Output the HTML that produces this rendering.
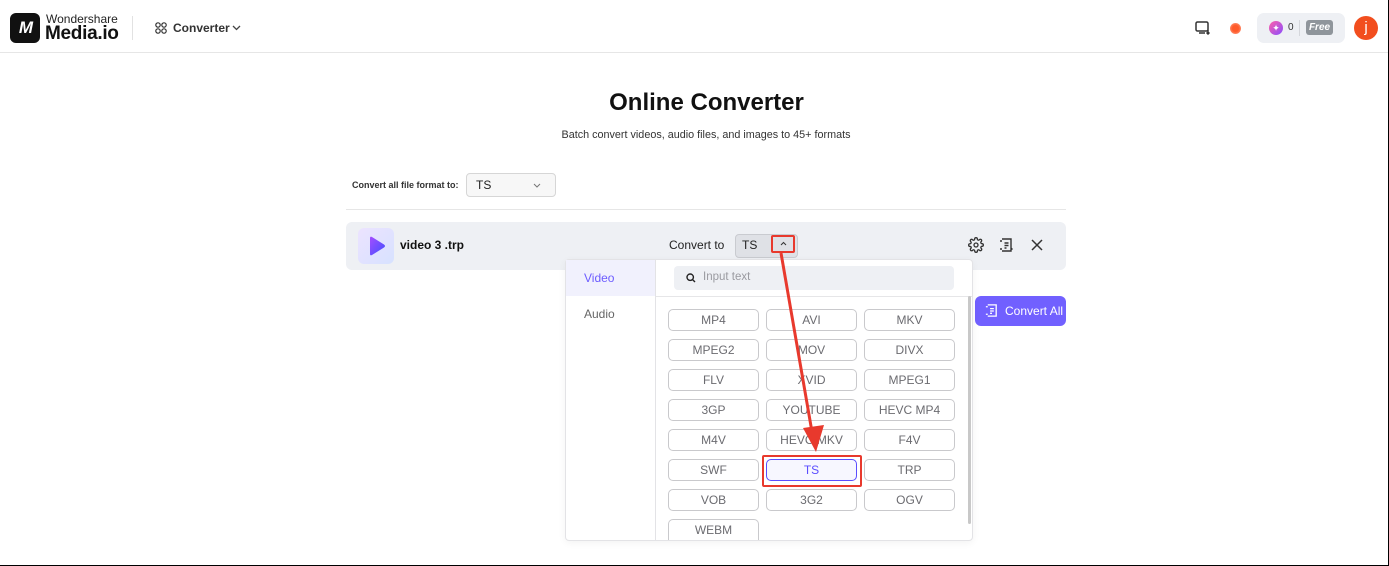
<!DOCTYPE html>
<html><head><meta charset="utf-8"><style>
*{margin:0;padding:0;box-sizing:border-box}
html,body{width:1389px;height:566px;overflow:hidden;background:#fff;font-family:"Liberation Sans",sans-serif;color:#111}
.frame{position:absolute;left:0;top:0;width:1389px;height:566px;border:1px solid #000;border-left:none;border-top:none;z-index:50;pointer-events:none}
.abs{position:absolute}
.top{position:absolute;left:0;top:0;width:1389px;height:53px;border-bottom:1px solid #e6e6e6}
.btn{position:absolute;width:91px;height:22px;border:1px solid #c9c9cc;border-radius:5px;font-size:12px;color:#6b6b70;text-align:center;line-height:20px;background:#fff}
</style></head><body>
<div class="top">
  <div class="abs" style="left:10px;top:13px;width:30px;height:30px;background:#111;border-radius:6px;color:#fff;font-weight:bold;font-style:italic;font-size:17px;line-height:30px;text-align:center;letter-spacing:-2px">M</div>
  <div class="abs" style="left:46px;top:12px;font-size:12px;color:#222">Wondershare</div>
  <div class="abs" style="left:45px;top:23px;font-size:19px;font-weight:bold;letter-spacing:-0.3px">Media.io</div>
  <div class="abs" style="left:132px;top:16px;width:1px;height:24px;background:#e2e2e2"></div>
  <svg class="abs" style="left:155px;top:22px" width="12" height="12" viewBox="0 0 12 12" fill="none" stroke="#333" stroke-width="1.2"><circle cx="3" cy="3" r="2.2"/><circle cx="9" cy="3" r="2.2"/><circle cx="3" cy="9" r="2.2"/><circle cx="9" cy="9" r="2.2"/></svg>
  <div class="abs" style="left:173px;top:21px;font-size:12px;font-weight:bold;color:#333">Converter</div>
  <svg class="abs" style="left:232px;top:25px" width="9" height="6" viewBox="0 0 9 6" fill="none" stroke="#444" stroke-width="1.3"><path d="M1 1l3.5 3.5L8 1"/></svg>
  <svg class="abs" style="left:1195px;top:21px" width="16" height="14" viewBox="0 0 16 14" fill="none" stroke="#333" stroke-width="1.5"><rect x="1" y="1" width="12" height="9" rx="1.5"/><path d="M4 12h6M13 9v4M11.5 11.5l1.5 1.5 1.5-1.5"/></svg>
  <div class="abs" style="left:1230px;top:23px;width:11px;height:11px;border-radius:50%;background:radial-gradient(circle,#ff5a2a 40%,#ffb29a 100%)"></div>
  <div class="abs" style="left:1257px;top:13px;width:88px;height:30px;background:#eef0f4;border-radius:7px"></div>
  <div class="abs" style="left:1269px;top:21px;width:14px;height:14px;border-radius:50%;background:linear-gradient(135deg,#ff5fa8,#8a4dff);color:#fff;font-size:9px;text-align:center;line-height:14px">✦</div>
  <div class="abs" style="left:1288px;top:22px;font-size:10px;color:#333">0</div>
  <div class="abs" style="left:1299px;top:20px;width:1px;height:16px;background:#d5d7dc"></div>
  <div class="abs" style="left:1306px;top:20px;width:27px;height:15px;background:#8f959b;border-radius:3px;color:#fff;font-size:10px;font-weight:bold;font-style:italic;text-align:center;line-height:15px">Free</div>
  <div class="abs" style="left:1354px;top:16px;width:24px;height:24px;border-radius:50%;background:#f24e1e;color:#fff;font-size:15px;text-align:center;line-height:23px">j</div>
</div>

<div class="abs" style="left:12px;width:1389px;top:89px;text-align:center;font-size:24px;font-weight:bold;color:#111">Online Converter</div>
<div class="abs" style="left:0;width:1412px;top:129px;text-align:center;font-size:10.8px;color:#333">Batch convert videos, audio files, and images to 45+ formats</div>

<div class="abs" style="left:352px;top:180px;font-size:9px;font-weight:bold;color:#333">Convert all file format to:</div>
<div class="abs" style="left:466px;top:173px;width:90px;height:24px;border:1px solid #d6d6d6;border-radius:4px;background:#f7f7f7"></div>
<div class="abs" style="left:476px;top:178px;font-size:12px;color:#222">TS</div>
<svg class="abs" style="left:533px;top:183px" width="8" height="5" viewBox="0 0 8 5" fill="none" stroke="#777" stroke-width="1"><path d="M1 1l3 3 3-3"/></svg>
<div class="abs" style="left:346px;top:209px;width:720px;height:1px;background:#e6e6e6"></div>

<div class="abs" style="left:346px;top:222px;width:720px;height:48px;background:#eef0f4;border-radius:6px"></div>
<div class="abs" style="left:358px;top:228px;width:36px;height:36px;border-radius:6px;background:linear-gradient(135deg,#ece3ff,#d7e2ff)"></div>
<svg class="abs" style="left:368px;top:236px" width="18" height="20" viewBox="0 0 18 20"><defs><linearGradient id="g" x1="0" y1="0" x2="1" y2="1"><stop offset="0" stop-color="#a44dff"/><stop offset="1" stop-color="#4150ff"/></linearGradient></defs><path d="M2 2Q2 0 4 1L16 8.5Q18 10 16 11.5L4 19Q2 20 2 18Z" fill="url(#g)"/></svg>
<div class="abs" style="left:400px;top:238px;font-size:12px;font-weight:bold;color:#111">video 3 .trp</div>
<div class="abs" style="left:669px;top:238px;font-size:12px;color:#222">Convert to</div>
<div class="abs" style="left:735px;top:234px;width:63px;height:24px;border:1px solid #c9cbd0;border-radius:4px;background:#dfe1e6"></div>
<div class="abs" style="left:742px;top:238px;font-size:12px;color:#222">TS</div>
<div class="abs" style="left:771px;top:235px;width:24px;height:18px;border:2px solid #e8392d;border-radius:2px"></div>
<svg class="abs" style="left:780px;top:241px" width="7" height="5" viewBox="0 0 7 5" fill="none" stroke="#333" stroke-width="1"><path d="M1 4l2.5-2.5L6 4"/></svg>
<svg class="abs" style="left:968px;top:237px" width="16" height="16" viewBox="0 0 24 24" fill="none" stroke="#333" stroke-width="2"><circle cx="12" cy="12" r="3"/><path d="M19.4 15a1.7 1.7 0 0 0 .3 1.8l.1.1a2 2 0 1 1-2.8 2.8l-.1-.1a1.7 1.7 0 0 0-1.8-.3 1.7 1.7 0 0 0-1 1.5V21a2 2 0 1 1-4 0v-.1a1.7 1.7 0 0 0-1.1-1.5 1.7 1.7 0 0 0-1.8.3l-.1.1a2 2 0 1 1-2.8-2.8l.1-.1a1.7 1.7 0 0 0 .3-1.8 1.7 1.7 0 0 0-1.5-1H3a2 2 0 1 1 0-4h.1a1.7 1.7 0 0 0 1.5-1.1 1.7 1.7 0 0 0-.3-1.8l-.1-.1a2 2 0 1 1 2.8-2.8l.1.1a1.7 1.7 0 0 0 1.8.3H9a1.7 1.7 0 0 0 1-1.5V3a2 2 0 1 1 4 0v.1a1.7 1.7 0 0 0 1 1.5 1.7 1.7 0 0 0 1.8-.3l.1-.1a2 2 0 1 1 2.8 2.8l-.1.1a1.7 1.7 0 0 0-.3 1.8V9a1.7 1.7 0 0 0 1.5 1H21a2 2 0 1 1 0 4h-.1a1.7 1.7 0 0 0-1.5 1z"/></svg>
<svg class="abs" style="left:998px;top:237px" width="16" height="16" viewBox="0 0 16 16" fill="none" stroke="#333" stroke-width="1.4"><path d="M4 2h9v12H4M2 4h2M2 12h2M6.5 6h4M6.5 8.5h4M6.5 11h2M13 11l1.5 1.5"/></svg>
<svg class="abs" style="left:1031px;top:239px" width="12" height="12" viewBox="0 0 12 12" stroke="#333" stroke-width="1.5"><path d="M1 1l10 10M11 1L1 11"/></svg>

<div class="abs" style="left:975px;top:296px;width:91px;height:30px;background:#7160ff;border-radius:6px;color:#fff;font-size:12px;line-height:30px;padding-left:30px">Convert All</div>
<svg class="abs" style="left:984px;top:303px" width="15" height="15" viewBox="0 0 16 16" fill="none" stroke="#fff" stroke-width="1.4"><path d="M4 2h9v12H4M2 4h2M2 12h2M6.5 6h4M6.5 8.5h4M6.5 11h2"/></svg>

<div class="abs" style="left:565px;top:259px;width:408px;height:282px;background:#fff;border:1px solid #e3e3e6;border-radius:4px;box-shadow:0 2px 8px rgba(0,0,0,.05)"></div>
<div class="abs" style="left:566px;top:260px;width:89px;height:36px;background:#f1f1fd"></div>
<div class="abs" style="left:655px;top:260px;width:1px;height:280px;background:#e3e3e6"></div>
<div class="abs" style="left:584px;top:271px;font-size:12px;color:#6c5cff">Video</div>
<div class="abs" style="left:584px;top:307px;font-size:12px;color:#666">Audio</div>
<div class="abs" style="left:674px;top:266px;width:280px;height:24px;background:#eef0f4;border-radius:4px"></div>
<svg class="abs" style="left:686px;top:273px" width="10" height="10" viewBox="0 0 10 10" fill="none" stroke="#222" stroke-width="1.4"><circle cx="4.2" cy="4.2" r="3.2"/><path d="M6.6 6.6L9 9"/></svg>
<div class="abs" style="left:703px;top:271px;font-size:11.5px;color:#9a9aa0">Input text</div>
<div class="abs" style="left:656px;top:296px;width:316px;height:1px;background:#e6e6e8"></div>
<div class="abs" style="left:968px;top:296px;width:3px;height:228px;background:#c8c8c8;border-radius:2px"></div>

<div class="btn" style="left:668px;top:309px">MP4</div><div class="btn" style="left:766px;top:309px">AVI</div><div class="btn" style="left:864px;top:309px">MKV</div>
<div class="btn" style="left:668px;top:339px">MPEG2</div><div class="btn" style="left:766px;top:339px">MOV</div><div class="btn" style="left:864px;top:339px">DIVX</div>
<div class="btn" style="left:668px;top:369px">FLV</div><div class="btn" style="left:766px;top:369px">XVID</div><div class="btn" style="left:864px;top:369px">MPEG1</div>
<div class="btn" style="left:668px;top:399px">3GP</div><div class="btn" style="left:766px;top:399px">YOUTUBE</div><div class="btn" style="left:864px;top:399px">HEVC MP4</div>
<div class="btn" style="left:668px;top:429px">M4V</div><div class="btn" style="left:766px;top:429px">HEVC MKV</div><div class="btn" style="left:864px;top:429px">F4V</div>
<div class="btn" style="left:668px;top:459px">SWF</div><div class="btn" style="left:766px;top:459px;border-color:#5b4dff;color:#5b4dff;background:#f7f7ff">TS</div><div class="btn" style="left:864px;top:459px">TRP</div>
<div class="btn" style="left:668px;top:489px">VOB</div><div class="btn" style="left:766px;top:489px">3G2</div><div class="btn" style="left:864px;top:489px">OGV</div>
<div class="btn" style="left:668px;top:519px;height:21px;border-bottom:none;border-radius:5px 5px 0 0">WEBM</div>
<div class="abs" style="left:762px;top:455px;width:100px;height:32px;border:2px solid #e8392d;border-radius:2px"></div>

<svg class="abs" style="left:0;top:0;z-index:10" width="1389" height="566"><path d="M781 253L812 432" stroke="#e8392d" stroke-width="3" fill="none"/><path d="M803 428L824 425L816 452Z" fill="#e8392d"/></svg>
<div class="frame"></div>
</body></html>
